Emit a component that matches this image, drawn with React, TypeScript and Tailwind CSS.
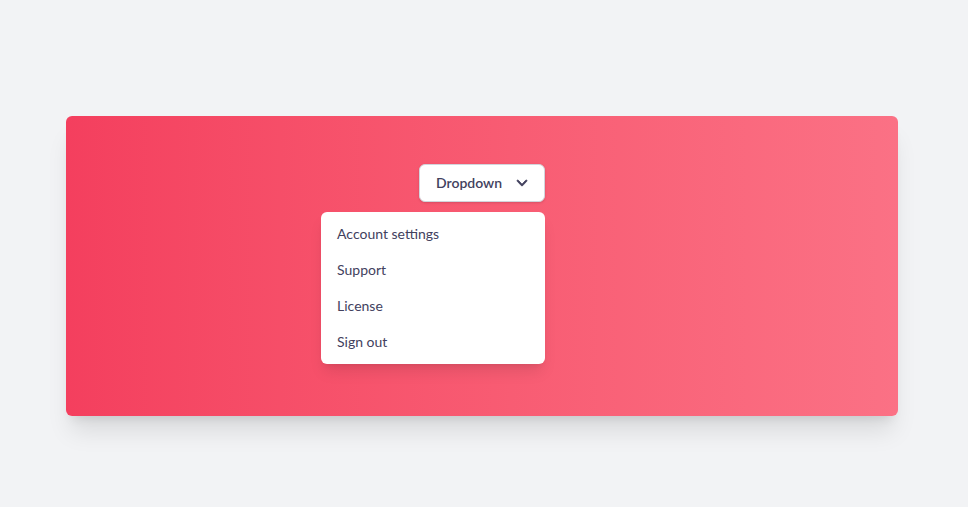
import { useState } from "react"

const items = ["Account settings", "Support", "License", "Sign out"]

const App = () => {
  const [open, setOpen] = useState(true)

  return (
    <div className="min-h-screen bg-[#f2f3f5] pl-[66px] pt-[116px] font-['Lato','Noto_Sans',sans-serif]">
      <div className="flex h-[300px] w-[832px] justify-center rounded-md bg-gradient-to-r from-[#f43f5e] to-[#fb7185] pt-12 shadow-[0_20px_25px_-5px_rgba(0,0,0,0.1),0_8px_10px_-6px_rgba(0,0,0,0.1)]">
        <div className="relative h-[38px]">
          <button
            onClick={() => setOpen(!open)}
            className="inline-flex items-center rounded-md border border-gray-300 bg-white px-4 py-2 text-sm font-semibold leading-5 text-[#42415e] shadow-sm"
          >
            Dropdown
            <svg viewBox="0 0 20 20" fill="currentColor" className="-mr-1 ml-[10px] h-5 w-5">
              <path fillRule="evenodd" stroke="currentColor" strokeWidth="0.8" d="M5.23 7.21a.75.75 0 011.06.02L10 11.168l3.71-3.938a.75.75 0 111.08 1.04l-4.25 4.5a.75.75 0 01-1.08 0l-4.25-4.5a.75.75 0 01.02-1.06z" />
            </svg>
          </button>
          {open && (
            <div className="absolute right-0 top-full mt-[10px] w-56 rounded-md bg-white py-1 shadow-lg">
              {items.map((item) => (
                <a key={item} href="#" className="block px-4 py-2 text-sm leading-5 text-[#42415e]">
                  {item}
                </a>
              ))}
            </div>
          )}
        </div>
      </div>
    </div>
  )
}

export default App
